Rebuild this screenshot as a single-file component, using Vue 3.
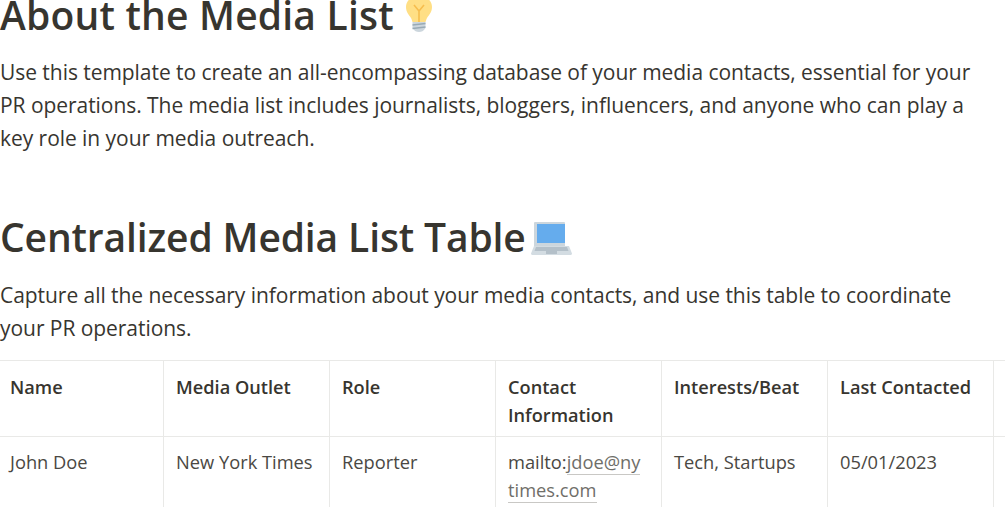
<template>
  <main class="page">
    <h1 class="title first">About the Media List<svg class="bulb" viewBox="0 3 26 33" aria-hidden="true">
      <path d="M13 0C5 0 0 5 0 11c0 5 3 8 5 11 1 2 1 3 1.500 4h13c.5-1 .5-2 1.500-4 2-3 5-6 5-11C26 5 21 0 13 0z" fill="#ffdf85"/>
      <path d="M8 9l5 6 5-6M13 15v11" fill="none" stroke="#f6bd4e" stroke-width="1.600"/>
      <path d="M6.500 26h13v6c-2 3-4 4-6.500 4s-4.500-1-6.500-4z" fill="#ccd6dd"/>
      <path d="M6.500 29l13-1.500M6.500 32.500l13-1.500" stroke="#99aab5" stroke-width="1.400"/>
    </svg></h1>
    <p class="text">Use this template to create an all-encompassing database of your media contacts, essential for your PR operations. The media list includes journalists, bloggers, influencers, and anyone who can play a key role in your media outreach.</p>
    <h1 class="title second">Centralized Media List Table<svg class="laptop" viewBox="0 0 41 33" aria-hidden="true">
      <path d="M4 0h29a1 1 0 0 1 1 1v24H3V1a1 1 0 0 1 1-1z" fill="#ccd6dd"/>
      <rect x="6" y="2" width="28" height="19" fill="#65aced"/>
      <path d="M3 24h35l3 7.500c0 .8-.6 1.500-1.500 1.500h-38C.6 33 0 32.300 0 31.500z" fill="#d3dce2"/>
      <path d="M5 25h31l1.500 4H3.500z" fill="#b4c0c9"/>
      <rect x="15" y="29" width="11" height="3" fill="#b4c0c9"/>
    </svg></h1>
    <p class="text lower">Capture all the necessary information about your media contacts, and use this table to coordinate your PR operations.</p>
    <table class="table">
      <colgroup>
        <col class="col-first" />
        <col v-for="n in 6" :key="n" class="col" />
      </colgroup>
      <thead>
        <tr>
          <th class="no-left">Name</th>
          <th>Media Outlet</th>
          <th>Role</th>
          <th>Contact Information</th>
          <th>Interests/Beat</th>
          <th>Last Contacted</th>
          <th></th>
        </tr>
      </thead>
      <tbody>
        <tr>
          <td class="no-left">John Doe</td>
          <td>New York Times</td>
          <td>Reporter</td>
          <td>mailto:<a class="link">jdoe@nytimes.com</a></td>
          <td>Tech, Startups</td>
          <td>05/01/2023</td>
          <td></td>
        </tr>
      </tbody>
    </table>
  </main>
</template>

<script setup>
</script>

<style>
html, body { margin: 0; overflow: hidden; background: #fff; }
</style>

<style scoped>
.page {
  width: 1005px;
  height: 507px;
  overflow: hidden;
  font-family: "Open Sans", "Noto Sans", sans-serif;
  color: #37352f;
}
.title {
  margin: 0;
  height: 50px;
  font-size: 39px;
  line-height: 50px;
  font-weight: 600;
  white-space: nowrap;
}
.first { margin-top: -10px; letter-spacing: 0.2px; }
.second { margin-top: 57px; letter-spacing: -0.13px; }
.bulb { width: 26px; height: 33px; margin-left: 12px; vertical-align: -2px; }
.laptop { width: 41px; height: 33px; margin-left: 5px; vertical-align: -3px; }
.text {
  margin: 0;
  padding-top: 16px;
  font-size: 21px;
  line-height: 33px;
  width: 990px;
  letter-spacing: -0.05px;
}
.lower { padding-top: 17px; }
.table {
  margin-top: 15px;
  width: 1060px;
  table-layout: fixed;
  border-collapse: collapse;
  font-size: 18.300px;
  line-height: 28px;
}
.col-first { width: 163px; }
.col { width: 166px; }
th, td {
  border: 1px solid #e9e9e7;
  text-align: left;
  vertical-align: top;
  overflow-wrap: anywhere;
}
th { font-weight: 600; font-size: 18.200px; padding: 12px 10px 7px 12.500px; }
td { font-weight: 400; color: #4a4843; padding: 11px 15.500px 8px 12.500px; }
.no-left { border-left: none; padding-left: 10px; }
.link { color: #6f6e69; border-bottom: 1px solid #c9c8c5; }
</style>
